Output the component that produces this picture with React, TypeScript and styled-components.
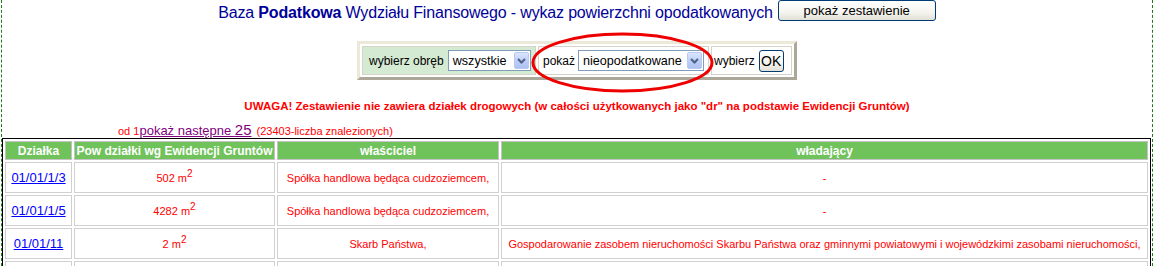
import React from 'react';
import styled, { createGlobalStyle } from 'styled-components';

const GlobalStyle = createGlobalStyle`
  html, body {
    margin: 0;
    padding: 0;
    background: #fff;
  }
  body {
    font-family: "Liberation Sans", Arial, sans-serif;
    overflow: hidden;
  }
`;

// Strona z przerywanym obramowaniem
const Page = styled.div`
  margin: 0 3px 0 1px;
  height: 266px;
  border-left: 1px dashed #1f7a1f;
  border-right: 1px dashed #1f7a1f;
`;

const TitleRow = styled.div`
  display: flex;
  justify-content: center;
  align-items: flex-start;
  gap: 5px;
  height: 21px;
`;

const Title = styled.span`
  margin-top: 4px;
  font-size: 16px;
  line-height: 18px;
  letter-spacing: -0.17px;
  color: #000099;
  white-space: nowrap;
`;

const XpButton = styled.button<{ w: number; h: number; size: number }>`
  width: ${(p) => p.w}px;
  height: ${(p) => p.h}px;
  padding: 0;
  border: 1px solid #003c74;
  border-radius: 3px;
  background: linear-gradient(#ffffff, #f5f4ef 60%, #e2e0d6);
  color: #000;
  font-family: "Liberation Sans", Arial, sans-serif;
  font-size: ${(p) => p.size}px;
  line-height: 1;
  box-sizing: border-box;
`;

const FormRow = styled.div`
  display: flex;
  justify-content: center;
  margin-top: 20px;
`;

const FormBox = styled.div`
  position: relative;
  display: flex;
  gap: 2px;
  padding: 2px;
  border: 3px solid;
  border-color: #ece9d8 #aca899 #aca899 #ece9d8;
  background: #fff;
`;

const FormCell = styled.div<{ w: number; green?: boolean; pad: number }>`
  display: flex;
  align-items: center;
  gap: ${(p) => (p.green ? 4 : 3)}px;
  width: ${(p) => p.w}px;
  height: 29px;
  box-sizing: border-box;
  padding-left: ${(p) => p.pad}px;
  border: 1px solid #d6d3c9;
  background: ${(p) => (p.green ? '#d5ead3' : '#fff')};
  font-size: 12px;
  color: #000;
  white-space: nowrap;
`;

const SelectBox = styled.div<{ w: number }>`
  display: flex;
  align-items: center;
  justify-content: space-between;
  width: ${(p) => p.w}px;
  height: 21px;
  box-sizing: border-box;
  padding: 0 1px 0 4px;
  border: 1px solid #7f9db9;
  background: #fff;
  font-size: 12.6px;
  color: #000;
`;

const SelectArrow = styled.span`
  display: flex;
  align-items: center;
  justify-content: center;
  flex-shrink: 0;
  width: 15px;
  height: 17px;
  box-sizing: border-box;
  border: 1px solid #b7c9f3;
  border-radius: 2px;
  background: linear-gradient(#dbe5fd, #bccdf7 55%, #aec2f3);
`;

const Ellipse = styled.svg`
  position: absolute;
  left: 169px;
  top: -13px;
  pointer-events: none;
  overflow: visible;
`;

const Warning = styled.div`
  margin-top: 20px;
  text-align: center;
  font-size: 11.5px;
  line-height: 13px;
  font-weight: bold;
  color: #ff0000;
  white-space: nowrap;
`;

const Pager = styled.div`
  height: 25px;
  box-sizing: border-box;
  padding: 9px 0 0 116px;
  line-height: 16px;
  font-size: 11px;
  color: #ff0000;
  white-space: nowrap;
`;

const PagerLink = styled.a`
  color: #800080;
  font-size: 13px;
  text-decoration: underline;
`;

const Big = styled.span`
  font-size: 15px;
`;

const Count = styled.span`
  margin-left: 5px;
`;

const Grid = styled.table`
  width: 1149px;
  border: 1px solid #000;
  border-collapse: separate;
  border-spacing: 2px;
  table-layout: fixed;
`;

const HeadCell = styled.th<{ w?: number }>`
  ${(p) => (p.w ? `width: ${p.w}px;` : '')}
  height: 19px;
  box-sizing: border-box;
  padding: 0;
  border: 1px solid #c4c4c4;
  background: #70c25b;
  color: #fff;
  font-size: 12px;
  font-weight: bold;
  text-align: center;
  white-space: nowrap;
`;

const Cell = styled.td`
  height: 31px;
  box-sizing: border-box;
  padding: 0 2px;
  border: 1px solid #d0d0d0;
  text-align: center;
  vertical-align: middle;
  color: #ff0000;
  font-size: 11px;
  white-space: nowrap;
  overflow: hidden;
`;

const ParcelLink = styled.a`
  color: #0000ff;
  font-size: 13px;
  text-decoration: underline;
`;

const Area = styled.span`
  font-size: 11px;
  sup {
    font-size: 10px;
    vertical-align: 5px;
    line-height: 0;
  }
`;

const Chevron = () => (
  <svg width="9" height="6" viewBox="0 0 9 6">
    <polyline points="1,1 4.5,4.5 8,1" fill="none" stroke="#4d6185" strokeWidth="2" />
  </svg>
);

const Select = ({ w, value }: { w: number; value: string }) => (
  <SelectBox w={w}>
    <span>{value}</span>
    <SelectArrow>
      <Chevron />
    </SelectArrow>
  </SelectBox>
);

const rows = [
  { id: '01/01/1/3', area: '502', owner: 'Spółka handlowa będąca cudzoziemcem,', holder: '-' },
  { id: '01/01/1/5', area: '4282', owner: 'Spółka handlowa będąca cudzoziemcem,', holder: '-' },
  {
    id: '01/01/11',
    area: '2',
    owner: 'Skarb Państwa,',
    holder:
      'Gospodarowanie zasobem nieruchomości Skarbu Państwa oraz gminnymi powiatowymi i wojewódzkimi zasobami nieruchomości,',
  },
];

export default function App() {
  return (
    <>
      <GlobalStyle />
      <Page>
        <TitleRow>
          <Title>
            Baza <b>Podatkowa</b> Wydziału Finansowego - wykaz powierzchni opodatkowanych
          </Title>
          <XpButton w={158} h={21} size={13}>
            pokaż zestawienie
          </XpButton>
        </TitleRow>

        <FormRow>
          <FormBox>
            <FormCell w={174} pad={6} green>
              wybierz obręb
              <Select w={83} value="wszystkie" />
            </FormCell>
            <FormCell w={171} pad={4}>
              pokaż
              <Select w={126} value="nieopodatkowane" />
            </FormCell>
            <FormCell w={81} pad={2}>
              wybierz
              <XpButton w={25} h={22} size={14} style={{ marginLeft: 1 }}>
                OK
              </XpButton>
            </FormCell>
            <Ellipse width="187" height="63">
              <ellipse cx="93.5" cy="31.5" rx="89.5" ry="28.5" fill="none" stroke="#ee0000" strokeWidth="3" />
            </Ellipse>
          </FormBox>
        </FormRow>

        <Warning>
          UWAGA! Zestawienie nie zawiera działek drogowych (w całości użytkowanych jako "dr" na podstawie Ewidencji
          Gruntów)
        </Warning>

        <Pager>
          od 1
          <PagerLink href="#">
            pokaż następne <Big>25</Big>
          </PagerLink>
          <Count>(23403-liczba znalezionych)</Count>
        </Pager>

        <Grid>
          <thead>
            <tr>
              <HeadCell w={67}>Działka</HeadCell>
              <HeadCell w={201}>Pow działki wg Ewidencji Gruntów</HeadCell>
              <HeadCell w={222}>właściciel</HeadCell>
              <HeadCell>władający</HeadCell>
            </tr>
          </thead>
          <tbody>
            {rows.map((r) => (
              <tr key={r.id}>
                <Cell>
                  <ParcelLink href="#">{r.id}</ParcelLink>
                </Cell>
                <Cell>
                  <Area>
                    {r.area} m<sup>2</sup>
                  </Area>
                </Cell>
                <Cell>{r.owner}</Cell>
                <Cell>{r.holder}</Cell>
              </tr>
            ))}
            {/* kolejny wiersz – ucięty na dole zrzutu */}
            <tr>
              <Cell />
              <Cell />
              <Cell />
              <Cell />
            </tr>
          </tbody>
        </Grid>
      </Page>
    </>
  );
}
